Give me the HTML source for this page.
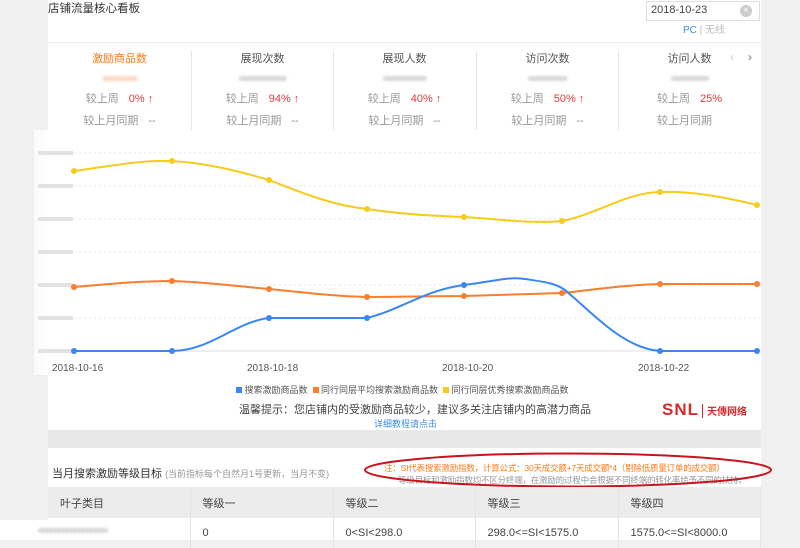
<!DOCTYPE html>
<html><head><meta charset="utf-8"><style>
*{margin:0;padding:0;box-sizing:border-box}
body{width:800px;height:540px;overflow:hidden;background:#f0f0f0;font-family:"Liberation Sans","Noto Sans CJK SC",sans-serif;position:relative;color:#333}
.a{position:absolute}
.panel{left:48px;top:0;width:713px;height:430px;background:#fff}
.t{font-size:12px;white-space:nowrap}
.blur{background:repeating-linear-gradient(90deg,#ccc 0 2px,#e6e6e6 2px 4px);filter:blur(1.2px);height:5px;border-radius:3px}
.metric{top:50px;width:143px;text-align:center;font-size:11px}
.metric .n{color:#555;height:14px}
.metric .r{color:#999;margin-top:9px}
.metric .r span{color:#e4393c;margin-left:10px}
.metric .r2{color:#999;margin-top:6px}
.metric .r2 span{margin-left:10px;color:#888}
.sep{top:51px;width:1px;height:80px;background:#e6e6e6}
td,th{border-right:1px solid #e4e4e4;font-weight:normal;text-align:left;padding-left:12px;font-size:11px;color:#444}
</style></head><body>
<div class="a panel"></div>
<div class="a t" style="left:48px;top:0;font-size:11.5px;color:#333">店铺流量核心看板</div>
<div class="a" style="left:48px;top:42px;width:713px;height:1px;background:#ececec"></div>
<div class="a" style="left:646px;top:1px;width:114px;height:20px;border:1px solid #ddd;background:#fff"></div>
<div class="a t" style="left:651px;top:4px;font-size:11px;color:#444">2018-10-23</div>
<div class="a" style="left:740px;top:5px;width:12px;height:12px;border-radius:6px;background:#ccc;color:#fff;font-size:10px;line-height:12px;text-align:center">×</div>
<div class="a t" style="left:683px;top:21px;font-size:10px;color:#3b8ee8">PC <span style="color:#bbb">| 无线</span></div>
<div class="a t" style="left:730px;top:50px;color:#ccc;font-size:12px">‹</div>
<div class="a t" style="left:748px;top:50px;color:#777;font-size:12px">›</div>

<div class="a metric" style="left:48px"><div class="n" style="color:#ff7a1a">激励商品数</div><div class="blur" style="width:36px;margin:12px auto 0;background:#fcd9c2"></div><div class="r">较上周<span>0% ↑</span></div><div class="r2">较上月同期<span>--</span></div></div>
<div class="a sep" style="left:191px"></div>
<div class="a metric" style="left:191px"><div class="n">展现次数</div><div class="blur" style="width:48px;margin:12px auto 0"></div><div class="r">较上周<span>94% ↑</span></div><div class="r2">较上月同期<span>--</span></div></div>
<div class="a sep" style="left:333px"></div>
<div class="a metric" style="left:333px"><div class="n">展现人数</div><div class="blur" style="width:44px;margin:12px auto 0"></div><div class="r">较上周<span>40% ↑</span></div><div class="r2">较上月同期<span>--</span></div></div>
<div class="a sep" style="left:476px"></div>
<div class="a metric" style="left:476px"><div class="n">访问次数</div><div class="blur" style="width:40px;margin:12px auto 0"></div><div class="r">较上周<span>50% ↑</span></div><div class="r2">较上月同期<span>--</span></div></div>
<div class="a sep" style="left:618px"></div>
<div class="a metric" style="left:618px"><div class="n">访问人数</div><div class="blur" style="width:38px;margin:12px auto 0"></div><div class="r">较上周<span>25%</span></div><div class="r2">较上月同期<span></span></div></div>

<div class="a" style="left:34px;top:130px;width:727px;height:245px;background:linear-gradient(90deg,#fafafa,#fff 15px)"></div>
<svg class="a" style="left:0;top:0" width="800" height="380">
<g stroke="#e4e4e4" stroke-dasharray="2,3">
<line x1="74" y1="153" x2="760" y2="153"/><line x1="74" y1="186" x2="760" y2="186"/><line x1="74" y1="219" x2="760" y2="219"/><line x1="74" y1="252" x2="760" y2="252"/><line x1="74" y1="285" x2="760" y2="285"/><line x1="74" y1="318" x2="760" y2="318"/></g>
<line x1="38" y1="351" x2="760" y2="351" stroke="#ddd"/>
<g fill="#e2e2e2"><rect x="38" y="151" width="35" height="4"/><rect x="38" y="184" width="35" height="4"/><rect x="38" y="217" width="35" height="4"/><rect x="38" y="250" width="35" height="4"/><rect x="38" y="283" width="35" height="4"/><rect x="38" y="316" width="35" height="4"/><rect x="38" y="349" width="35" height="4"/></g>
<g fill="none" stroke-width="2">
<path d="M74 171 C110 166,140 160,172 161 C205 163,235 170,269 180 C300 192,330 205,367 209 C400 214,430 216,464 217 C500 219,530 224,562 221 C600 213,625 193,660 192 C690 191,720 196,757 205" stroke="#f5cc1c"/>
<path d="M74 287 C110 284,140 281,172 281 C205 282,235 286,269 289 C300 292,330 296,367 297 C400 297,430 296,464 296 C500 295,530 294,562 293 C600 289,625 285,660 284 L757 284" stroke="#fb7d2e"/>
<path d="M74 351 L172 351 C210 351,235 322,269 318 L367 318 C400 310,425 290,464 285 C490 282,510 276,525 279 C545 282,555 283,565 290 C600 320,625 348,660 351 L757 351" stroke="#3a86f5"/>
</g>
<g fill="#f5cc1c"><circle cx="74" cy="171" r="3"/><circle cx="172" cy="161" r="3"/><circle cx="269" cy="180" r="3"/><circle cx="367" cy="209" r="3"/><circle cx="464" cy="217" r="3"/><circle cx="562" cy="221" r="3"/><circle cx="660" cy="192" r="3"/><circle cx="757" cy="205" r="3"/></g>
<g fill="#fb7d2e"><circle cx="74" cy="287" r="3"/><circle cx="172" cy="281" r="3"/><circle cx="269" cy="289" r="3"/><circle cx="367" cy="297" r="3"/><circle cx="464" cy="296" r="3"/><circle cx="562" cy="293" r="3"/><circle cx="660" cy="284" r="3"/><circle cx="757" cy="284" r="3"/></g>
<g fill="#3a86f5"><circle cx="74" cy="351" r="3"/><circle cx="172" cy="351" r="3"/><circle cx="269" cy="318" r="3"/><circle cx="367" cy="318" r="3"/><circle cx="464" cy="285" r="3"/><circle cx="660" cy="351" r="3"/><circle cx="757" cy="351" r="3"/></g>
<g font-size="10" fill="#555" font-family="Liberation Sans"><text x="52" y="371">2018-10-16</text><text x="247" y="371">2018-10-18</text><text x="442" y="371">2018-10-20</text><text x="638" y="371">2018-10-22</text></g>
</svg>
<div class="a t" style="left:236px;top:383px;font-size:9px;color:#555"><span style="display:inline-block;width:6px;height:6px;background:#3a86f5"></span> 搜索激励商品数 &nbsp;<span style="display:inline-block;width:6px;height:6px;background:#fb7d2e"></span> 同行同层平均搜索激励商品数 &nbsp;<span style="display:inline-block;width:6px;height:6px;background:#f5cc1c"></span> 同行同层优秀搜索激励商品数</div>
<div class="a t" style="left:239px;top:401px;font-size:11px;color:#444">温馨提示：您店铺内的受激励商品较少，建议多关注店铺内的高潜力商品</div>
<div class="a t" style="left:374px;top:417px;font-size:9px;color:#3b8ee8">详细教程请点击</div>
<div class="a t" style="left:662px;top:400px;font-size:17px;font-weight:bold;color:#d62b2b;letter-spacing:1px">SNL</div>
<div class="a" style="left:702px;top:404px;width:1px;height:14px;background:#d62b2b"></div>
<div class="a t" style="left:707px;top:403px;font-size:10px;font-weight:bold;color:#d62b2b">天傳网络</div>
<div class="a" style="left:48px;top:430px;width:713px;height:18px;background:#e8e8e8"></div>
<div class="a" style="left:48px;top:448px;width:713px;height:92px;background:#fff"></div>
<div class="a t" style="left:52px;top:465px;font-size:11px;color:#333">当月搜索激励等级目标 <span style="font-size:9px;color:#999">(当前指标每个自然月1号更新，当月不变)</span></div>
<div class="a t" style="left:384px;top:462px;font-size:8.5px;color:#ff7a1a;letter-spacing:-0.2px">注：SI代表搜索激励指数，计算公式：30天成交额+7天成交额*4（剔除低质量订单的成交额）</div>
<div class="a t" style="left:398px;top:474px;font-size:8.5px;color:#999;letter-spacing:-0.2px">等级目标和激励指数均不区分终端，在激励的过程中会根据不同终端的转化率给予不同的扶持。</div>
<svg class="a" style="left:0;top:0" width="800" height="540"><ellipse cx="568" cy="470" rx="203" ry="16.5" fill="none" stroke="#c8141c" stroke-width="2"/></svg>
<table class="a" style="left:48px;top:487px;width:713px;border-collapse:collapse">
<tr style="background:#ececec;height:31px"><th>叶子类目</th><th>等级一</th><th>等级二</th><th>等级三</th><th>等级四</th></tr>
<tr style="height:30px"><td style="width:142px"></td><td style="width:143px">0</td><td style="width:142px">0&lt;SI&lt;298.0</td><td style="width:143px">298.0&lt;=SI&lt;1575.0</td><td>1575.0&lt;=SI&lt;8000.0</td></tr>
</table>
<div class="a" style="left:0;top:520px;width:48px;height:20px;background:#fff"></div>
<div class="a blur" style="left:38px;top:528px;width:70px"></div>
</body></html>
